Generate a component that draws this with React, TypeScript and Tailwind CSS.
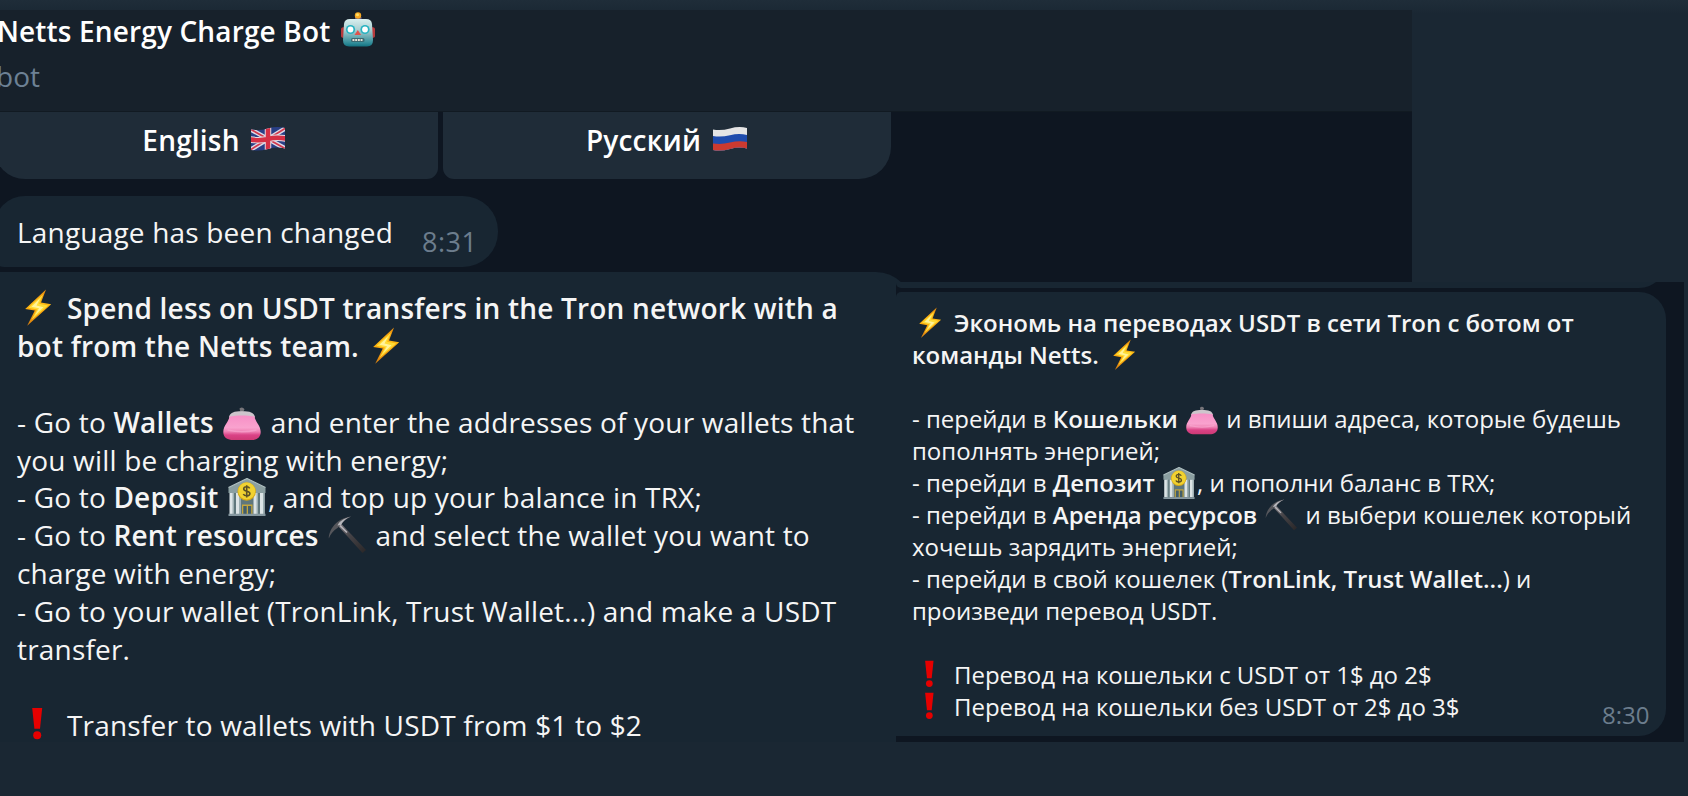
import { clsx } from 'clsx'
import type { ReactNode } from 'react'

/** Shared frame for the inline emoji, drawn on a 38-unit square. */
function Emoji({ small, className, children }: { small?: boolean; className?: string; children: ReactNode }) {
  return (
    <svg viewBox="0 0 38 38" className={clsx('shrink-0', small ? 'h-8 w-8' : '-mt-[2px] h-[38px] w-[38px]', className)}>
      {children}
    </svg>
  )
}

function Bolt({ small, className }: { small?: boolean; className?: string }) {
  return (
    <Emoji small={small} className={className}>
      <defs>
        <linearGradient id="bolt" x1="0" y1="0" x2="0" y2="1">
          <stop offset="0" stopColor="#e98a0c" />
          <stop offset="0.4" stopColor="#fdb813" />
          <stop offset="0.6" stopColor="#fba50a" />
          <stop offset="1" stopColor="#d97f10" />
        </linearGradient>
      </defs>
      <path d="M27 .5 6.200 19.900l9.600 1.700L8.200 36.800 32.200 15.200l-10.200-1.600Z" fill="url(#bolt)" />
      <path d="m24 5.500-14.500 13.300 8.500 1.700-5.500 10.500 16.500-14.600-9-1.600Z" fill="#ffdc36" />
      <path d="m21 9.500-8.500 8.200 7.500 1.600-4 7 8.500-8-7-1.800Z" fill="#fff39a" />
    </Emoji>
  )
}

function Purse({ small, className }: { small?: boolean; className?: string }) {
  return (
    <Emoji small={small} className={className}>
      <defs>
        <linearGradient id="purse" x1="0" y1="0" x2="0" y2="1">
          <stop offset="0" stopColor="#f78fc6" />
          <stop offset="0.5" stopColor="#f9a2ce" />
          <stop offset="0.66" stopColor="#ef82b4" />
          <stop offset="0.8" stopColor="#da4286" />
          <stop offset="1" stopColor="#cd3a75" />
        </linearGradient>
      </defs>
      <path d="M16.500 5.500q3-2.200 5 .8l-1.500 3.200h-2.500Z" fill="#77757a" />
      <path d="M6 14C7 9.500 11 8.300 19 8.300S31 9.500 32 14L30 17H8Z" fill="#cdc5cc" />
      <path
        d="M6.500 13.500C14 12 24 12 31.500 13.500 32 18.500 37.700 22.500 37.700 29 37.700 35 33 37 28 37H10C5 37 .3 35 .3 29 .3 22.500 6 18.500 6.500 13.500Z"
        fill="url(#purse)"
      />
      <path d="M4.500 27q14.500 3.500 29 0" stroke="#fbb2d7" strokeWidth="1.500" fill="none" opacity=".5" />
    </Emoji>
  )
}

function Bank({ small, className }: { small?: boolean; className?: string }) {
  return (
    <Emoji small={small} className={className}>
      <path d="M2 14h34v22H2Z" fill="#5f777c" />
      <path d="M.5 9.500 19 .5 37.500 9.500v5.500H.5Z" fill="#8b9fa1" />
      <path d="M.5 9.500 19 .5 37.500 9.500" stroke="#afbfc0" strokeWidth="1.200" fill="none" />
      <path d="M1.500 15h4.500v21H1.500ZM8 15h4.500v21H8ZM25.500 15H30v21h-4.500ZM32 15h4.500v21H32Z" fill="#dce4e6" />
      <path d="M4.500 15H6v21H4.500ZM11 15h1.500v21H11ZM28.500 15H30v21h-1.500ZM35 15h1.500v21H35Z" fill="#9eb0b3" />
      <path d="M14 26.500h10.500v10H14Z" fill="#c5a63c" />
      <path d="M15.300 28h3.400v8.500h-3.400ZM20 28h3.200v8.500H20Z" fill="#425e6b" />
      <path d="M.5 35.800h37V38H.5Z" fill="#8698a0" />
      <circle cx="18.700" cy="13.500" r="9.200" fill="#d8aa16" />
      <circle cx="18.700" cy="13" r="8.500" fill="#f1d231" />
      <path
        d="M21.700 10.400c-.6-1.100-1.700-1.600-3-1.600-1.800 0-3 .8-3 2.200 0 3.100 6.200 1.500 6.200 4.500 0 1.500-1.400 2.300-3.200 2.300-1.600 0-2.800-.6-3.400-1.800M18.700 7.200v12.200"
        stroke="#5b5025"
        strokeWidth="1.600"
        fill="none"
      />
    </Emoji>
  )
}

function Pickaxe({ small, className }: { small?: boolean; className?: string }) {
  return (
    <Emoji small={small} className={className}>
      <defs>
        <linearGradient id="handle" x1="0" y1="0" x2="1" y2="1">
          <stop offset="0" stopColor="#88858a" />
          <stop offset="0.4" stopColor="#464448" />
          <stop offset="1" stopColor="#292627" />
        </linearGradient>
      </defs>
      <path d="m10 10 3-2.500L38 34l-3.500 3Z" fill="url(#handle)" />
      <path d="M.8 22.500C1 14 8 2.500 23 .5c-5 2.500-8 5-9.500 8l-4 3.500C5.500 14.500 2.500 18 .8 22.500Z" fill="#55565b" />
      <path d="M23 .5C14 3 11 6 9.500 9.500L13 9c2-4 5-6.500 10-8.500Z" fill="#b6b6bb" />
      <path d="m12 9.500 7 7" stroke="#b8b6bb" strokeWidth="1.600" />
    </Emoji>
  )
}

function Exclamation({ small, className }: { small?: boolean; className?: string }) {
  return (
    <Emoji small={small} className={className}>
      <path d="M13.200 2h10l-2.200 20.800h-5.600Z" fill="#e60000" />
      <ellipse cx="18.200" cy="29.200" rx="4" ry="4" fill="#e60000" />
    </Emoji>
  )
}

function Robot({ className }: { className?: string }) {
  return (
    <svg viewBox="0 0 34 35" className={clsx('h-[35px] w-[34px] shrink-0', className)}>
      <defs>
        <linearGradient id="robot" x1="0" y1="0" x2="0" y2="1">
          <stop offset="0" stopColor="#d9efef" />
          <stop offset="0.4" stopColor="#a9cfd1" />
          <stop offset="0.9" stopColor="#2a8895" />
          <stop offset="1" stopColor="#12707f" />
        </linearGradient>
      </defs>
      <path d="M0 17q0-2 4-2v11q-4 0-4-2ZM34 17q0-2-4-2v11q4 0 4-2Z" fill="#b83a3c" />
      <path d="M14 5h6.500v4H14Z" fill="#63577f" />
      <circle cx="17" cy="3.500" r="3.200" fill="#f7a823" />
      <circle cx="16.500" cy="2.800" r="1.500" fill="#ffe067" />
      <path d="M3 12q.5-5 6-5h16q5.500 0 6 5l1 16q0 6.500-6 6.500H8q-6 0-6-6.500Z" fill="url(#robot)" />
      <circle cx="9.500" cy="17.500" r="4.600" fill="#28b3c2" />
      <circle cx="24" cy="17.500" r="4.600" fill="#28b3c2" />
      <circle cx="9.500" cy="17.500" r="2.900" fill="#fff" />
      <circle cx="24" cy="17.500" r="2.900" fill="#fff" />
      <path d="m16.800 18 3.300 5h-6.600Z" fill="#e0524b" />
      <rect x="10" y="26" width="13.500" height="4" rx="1.500" fill="#3c6a72" />
      <path d="M11.500 28H22" stroke="#e8e3d8" strokeWidth="2" strokeDasharray="1.900 .8" />
    </svg>
  )
}

/** Outline of a waving flag, shared as a clip by both language buttons. */
const FLAG_OUTLINE = 'M0 2.500Q8 4 17 1.500T34 1v20.500Q26 19.500 17 22T0 23Z'

function FlagGB() {
  return (
    <svg viewBox="0 0 34 24" className="mb-[3px] h-6 w-[34px]">
      <clipPath id="gb">
        <path d={FLAG_OUTLINE} />
      </clipPath>
      <g clipPath="url(#gb)">
        <path d="M0 0h34v24H0Z" fill="#293f86" />
        <path d="m-1 2 36 20M-1 23 35 1" stroke="#dcd9e6" strokeWidth="4.500" />
        <path d="m-1 2 36 20M-1 23 35 1" stroke="#d2394d" strokeWidth="1.700" />
        <path d="M17-1v26M-1 12.500Q9 14 17 12t18-.5" stroke="#e3dbe3" strokeWidth="6.500" fill="none" />
        <path d="M17-1v26M-1 12.500Q9 14 17 12t18-.5" stroke="#d62f44" strokeWidth="4.500" fill="none" />
      </g>
    </svg>
  )
}

function FlagRU() {
  return (
    <svg viewBox="0 0 34 24" className="mb-[3px] h-6 w-[34px]">
      <clipPath id="ru">
        <path d={FLAG_OUTLINE} />
      </clipPath>
      <g clipPath="url(#ru)">
        <path d="M0 0h34v24H0Z" fill="#e5e5e5" />
        <path d="M0 9q8 1.500 17-.8T34 8v16H0Z" fill="#1f4cad" />
        <path d="M0 16.500q8 1.300 17-.9t17-.5V24H0Z" fill="#cc3a30" />
      </g>
    </svg>
  )
}

function Line({ children }: { children?: ReactNode }) {
  return <p className="flex h-[1lh] items-center whitespace-pre">{children}</p>
}

function B({ children }: { children: ReactNode }) {
  return <b className="font-semibold">{children}</b>
}

function EnglishMessage() {
  return (
    <div className="mt-[5px] h-[470px] w-[912px] shrink-0 rounded-tr-[36px] bg-[#182632] pt-[18px] pl-[17px] text-[28px] leading-[37.9px] tracking-[0.19px] text-[#f5f5f5]">
      <Line>
        <Bolt className="mr-[10px] ml-[2px]" />
        <B>Spend less on USDT transfers in the Tron network with a</B>
      </Line>
      <Line>
        <B>bot from the Netts team. </B>
        <Bolt className="ml-px" />
      </Line>
      <Line />
      <Line>
        - Go to <B>Wallets </B>
        <Purse className="mx-[2px]" /> and enter the addresses of your wallets that
      </Line>
      <Line>you will be charging with energy;</Line>
      <Line>
        - Go to <B>Deposit </B>
        <Bank className="mx-[2px]" />, and top up your balance in TRX;
      </Line>
      <Line>
        - Go to <B>Rent resources </B>
        <Pickaxe className="mx-[2px]" /> and select the wallet you want to
      </Line>
      <Line>charge with energy;</Line>
      <Line>- Go to your wallet (TronLink, Trust Wallet...) and make a USDT</Line>
      <Line>transfer.</Line>
      <Line />
      <Line>
        <Exclamation className="mr-[10px] ml-[2px]" />
        Transfer to wallets with USDT from $1 to $2
      </Line>
    </div>
  )
}

function RussianMessage() {
  return (
    <div className="flex h-[444px] w-[770px] rounded-r-[27px] rounded-tl-[5px] bg-[#182632] pt-[15px] pl-4 text-[24px] leading-8 tracking-[-0.02px] text-[#f5f5f5]">
      <div className="w-[690px]">
        <Line>
          <Bolt small className="mr-2 ml-[2px]" />
          <B>Экономь на переводах USDT в сети Tron с ботом от</B>
        </Line>
        <Line>
          <B>команды Netts. </B>
          <Bolt small className="ml-[3px]" />
        </Line>
        <Line />
        <Line>
          - перейди в <B>Кошельки </B>
          <Purse small className="mx-[2px]" /> и впиши адреса, которые будешь
        </Line>
        <Line>пополнять энергией;</Line>
        <Line>
          - перейди в <B>Депозит </B>
          <Bank small className="mx-[2px]" />, и пополни баланс в TRX;
        </Line>
        <Line>
          - перейди в <B>Аренда ресурсов </B>
          <Pickaxe small className="mx-[2px]" /> и выбери кошелек который
        </Line>
        <Line>хочешь зарядить энергией;</Line>
        <Line>
          - перейди в свой кошелек (<B>TronLink, Trust Wallet...</B>) и
        </Line>
        <Line>произведи перевод USDT.</Line>
        <Line />
        <Line>
          <Exclamation small className="mr-2 ml-[2px]" />
          Перевод на кошельки с USDT от 1$ до 2$
        </Line>
        <Line>
          <Exclamation small className="mr-2 ml-[2px]" />
          Перевод на кошельки без USDT от 2$ до 3$
        </Line>
      </div>
      <time className="mb-[5px] self-end text-[24px] text-[#6c7d8d]">8:30</time>
    </div>
  )
}

export default function App() {
  return (
    <div className="relative h-[796px] w-[1688px] overflow-hidden bg-[#1a2733] bg-[linear-gradient(#1f2d39,#1a2733_14px)] pt-[10px] font-['Open_Sans',sans-serif]">
      <main className="flex h-[732px] w-[1412px] flex-col bg-[#0e1621]">
        <header className="flex h-[102px] flex-col border-b border-[#111a22] bg-[#17212b]">
          <h1 className="-ml-[3px] flex h-[42px] items-center text-[28px] font-semibold tracking-[0.15px] whitespace-pre text-white">
            Netts Energy Charge Bot
            <Robot className="-mt-1 ml-[11px]" />
          </h1>
          <span className="-ml-[4px] text-[28px] leading-[48px] text-[#6d8195]">bot</span>
        </header>

        <div className="flex h-[67px] gap-[5px] text-[28px] font-semibold tracking-[0.19px] text-white">
          <button className="-ml-[6px] flex w-[444px] items-center justify-center gap-[11px] rounded-br-[11px] rounded-bl-[31px] bg-[#1f2c38] pr-[5px] pb-[11px]">
            English <FlagGB />
          </button>
          <button className="flex w-[448px] items-center justify-center gap-[12px] rounded-br-[32px] rounded-bl-[11px] bg-[#1f2c38] pr-px pb-[11px]">
            Русский <FlagRU />
          </button>
        </div>

        <div className="mt-[17px] -ml-[6px] flex h-[71px] w-[504px] shrink-0 rounded-r-[35px] rounded-tl-[31px] rounded-bl-[10px] bg-[#182632] pl-[23px] text-[28px] leading-[38px] whitespace-nowrap">
          <span className="w-[405px] pt-[17px] tracking-[0.19px] text-[#f5f5f5]">Language has been changed</span>
          <time className="pt-[27px] text-[27px] leading-[38px] tracking-[0.5px] text-[#6c7d8d]">8:31</time>
        </div>

        <EnglishMessage />
      </main>

      {/* Second chat window laid over the first one */}
      <section className="absolute top-[282px] left-[896px] flex h-[460px] w-[788px] flex-col gap-1 bg-[#0e1621]">
        <div className="h-[6px] w-[770px] overflow-hidden">
          <div className="-mt-[54px] h-[60px] rounded-br-[27px] rounded-bl-[5px] bg-[#182632]" />
        </div>
        <RussianMessage />
      </section>
    </div>
  )
}
